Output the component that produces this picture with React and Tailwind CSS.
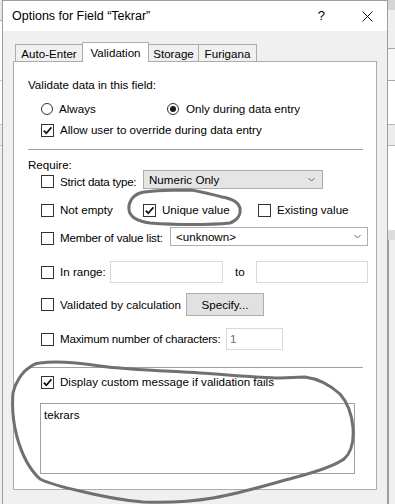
import React from "react";

function Check({ checked }) {
    return (
        <span className="flex h-[13px] w-[13px] shrink-0 items-center justify-center border border-[#333333] bg-white">
            {checked && (
                <svg width="11" height="11" viewBox="0 0 11 11">
                    <path d="M1.8 5.6 L4.3 8.2 L9.4 2.4" fill="none" stroke="#111" strokeWidth="1.7" />
                </svg>
            )}
        </span>
    );
}

function Radio({ selected }) {
    return (
        <span className="flex h-[12px] w-[12px] shrink-0 items-center justify-center rounded-full border border-[#333333] bg-white">
            {selected && <span className="h-[6px] w-[6px] rounded-full bg-[#1a1a1a]" />}
        </span>
    );
}

function Chevron() {
    return (
        <svg width="7" height="5" viewBox="0 0 7 5" className="shrink-0">
            <path d="M0.5 1 L3.5 4 L6.5 1" fill="none" stroke="#606060" strokeWidth="1" />
        </svg>
    );
}

function Label({ className = "", children }) {
    return <span className={`ml-[6px] shrink-0 whitespace-nowrap ${className}`}>{children}</span>;
}

function Tab({ label, selected, className }) {
    if (selected) {
        return (
            <div className={`relative z-10 mb-[-1px] flex h-[20px] shrink-0 items-start justify-center border border-b-0 border-[#acacac] bg-white pt-[3px] ${className}`}>
                {label}
            </div>
        );
    }
    return (
        <div className={`flex h-[17px] shrink-0 items-start justify-center border-t border-[#acacac] bg-[#f0f0f0] pt-[2px] ${className}`}>
            {label}
        </div>
    );
}

export default function App() {
    return (
        <div className="relative flex h-[504px] w-[395px] overflow-hidden bg-[#f0f0f0] font-['Liberation_Sans',Arial,sans-serif] text-[11.6px] leading-[14px] text-black">
            {/* fenêtre derrière, à gauche */}
            <div className="flex w-[2px] shrink-0 flex-col bg-[#f0f0f0]">
                <div className="h-[20px] bg-[#e6e6e6]" />
                <div className="h-px bg-[#b4b4b4]" />
                <div className="h-[59px] bg-white" />
                <div className="h-px bg-[#c8c8c8]" />
                <div className="h-[43px] bg-white" />
                <div className="h-px bg-[#c8c8c8]" />
                <div className="h-[20px] bg-[#ececec]" />
                <div className="h-px bg-[#c8c8c8]" />
            </div>

            {/* dialogue */}
            <div className="flex w-[386px] shrink-0 flex-col border-x border-t border-[#9c9c9c]">
                <div className="flex h-[30px] shrink-0 items-center bg-white pl-[9px] pr-[14px] text-[12.5px]">
                    <span className="flex-1 whitespace-nowrap">Options for Field “Tekrar”</span>
                    <span className="mr-[37px] text-[13px]">?</span>
                    <svg width="11" height="11" viewBox="0 0 11 11">
                        <path d="M0.5 0.5 L10.5 10.5 M10.5 0.5 L0.5 10.5" stroke="#111" strokeWidth="1" />
                    </svg>
                </div>

                <div className="flex flex-1 flex-col bg-[#f0f0f0] pl-[10px] pt-[11px]">
                    <div className="ml-[2px] flex items-end">
                        <Tab label="Auto-Enter" className="w-[67px] border-l" />
                        <Tab label="Validation" selected className="w-[67px]" />
                        <Tab label="Storage" className="w-[50px] border-r" />
                        <Tab label="Furigana" className="w-[58px] border-r" />
                    </div>

                    <div className="flex h-[429px] w-[364px] flex-col border border-[#acacac] bg-white pl-[14px]">
                        <div className="mt-[15px] flex h-[16px] items-center whitespace-nowrap">Validate data in this field:</div>

                        <div className="mt-[8px] flex h-[16px] items-center pl-[13px]">
                            <Radio />
                            <Label className="w-[108px]">Always</Label>
                            <Radio selected />
                            <Label className="ml-[7px]">Only during data entry</Label>
                        </div>

                        <div className="mt-[5px] flex h-[16px] items-center pl-[13px]">
                            <Check checked />
                            <Label>Allow user to override during data entry</Label>
                        </div>

                        <div className="mt-[11px] h-px w-[335px] bg-[#a0a0a0]" />

                        <div className="mt-[9px] flex h-[12px] items-center">Require:</div>

                        <div className="flex h-[21px] items-center pl-[13px]">
                            <Check />
                            <Label className="w-[83px] tracking-[-0.25px]">Strict data type:</Label>
                            <div className="mb-[4px] flex h-[19px] w-[180px] shrink-0 items-center justify-between border border-[#acacac] bg-[#e5e5e5] pl-[5px] pr-[7px]">
                                <span>Numeric Only</span>
                                <Chevron />
                            </div>
                        </div>

                        <div className="mt-[7px] flex h-[22px] items-center pl-[13px]">
                            <Check />
                            <Label className="w-[83px]">Not empty</Label>
                            <Check checked />
                            <Label className="w-[96px]">Unique value</Label>
                            <Check />
                            <Label>Existing value</Label>
                        </div>

                        <div className="mt-[7px] flex h-[20px] items-center pl-[13px]">
                            <Check />
                            <Label className="w-[110px] tracking-[-0.2px]">Member of value list:</Label>
                            <div className="mb-[3px] flex h-[19px] w-[198px] shrink-0 items-center justify-between border border-[#abadb3] bg-white pl-[5px] pr-[6px]">
                                <span>&lt;unknown&gt;</span>
                                <Chevron />
                            </div>
                        </div>

                        <div className="mt-[13px] flex h-[22px] items-center pl-[13px]">
                            <Check />
                            <Label className="w-[50px]">In range:</Label>
                            <div className="h-[22px] w-[113px] shrink-0 border border-[#d9d9d9] bg-white" />
                            <span className="w-[33px] shrink-0 pl-[12px]">to</span>
                            <div className="h-[22px] w-[112px] shrink-0 border border-[#d9d9d9] bg-white" />
                        </div>

                        <div className="mt-[10px] flex h-[23px] items-center pl-[13px]">
                            <Check />
                            <Label className="w-[126px]">Validated by calculation</Label>
                            <div className="flex h-[23px] w-[78px] shrink-0 items-center justify-center border border-[#adadad] bg-[#e1e1e1]">Specify...</div>
                        </div>

                        <div className="mt-[12px] flex h-[22px] items-center pl-[13px]">
                            <Check />
                            <Label className="w-[166px] tracking-[-0.2px]">Maximum number of characters:</Label>
                            <div className="flex h-[22px] w-[57px] shrink-0 items-center border border-[#d9d9d9] bg-white pl-[3px] text-[#6d6d6d]">1</div>
                        </div>

                        <div className="mt-[17px] h-px w-[335px] bg-[#a0a0a0]" />

                        <div className="mt-[7px] flex h-[14px] items-center pl-[13px]">
                            <Check checked />
                            <Label>Display custom message if validation fails</Label>
                        </div>

                        <div className="ml-[12px] mt-[14px] h-[71px] w-[315px] border border-[#a0a0a0] bg-white px-[3px] pt-[4px]">tekrars</div>
                    </div>
                </div>
            </div>

            {/* fenêtre derrière, à droite */}
            <div className="flex flex-1 flex-col bg-[#f0f0f0]">
                <div className="h-[10px] bg-[#d6d6d6]" />
                <div className="h-[38px] bg-[#f0f0f0]" />
                <div className="h-px bg-[#a8a8a8]" />
                <div className="h-[31px] bg-[#f7f7f7]" />
                <div className="h-px bg-[#a8a8a8]" />
                <div className="h-[43px] bg-white" />
                <div className="h-px bg-[#b8b8b8]" />
                <div className="h-[20px] bg-[#ececec]" />
                <div className="h-px bg-[#b8b8b8]" />
                <div className="h-[84px] bg-white" />
                <div className="h-[10px] bg-[#dcdcdc]" />
                <div className="flex-1 border-l border-[#a0a0a0] bg-[#f0f0f0]" />
            </div>

            {/* traits dessinés à la main */}
            <svg className="pointer-events-none absolute left-0 top-0" width="395" height="504" viewBox="0 0 395 504">
                <path
                    d="M190 190 C170 190 150 190 140 193 C132 196 128 203 129 210 C130 217 136 221 150 223 C175 225 210 225 230 223 C238 220 241 214 240 208 C238 202 233 199 222 197 C210 194 200 191 190 190"
                    fill="none"
                    stroke="#707070"
                    strokeWidth="3"
                    strokeLinejoin="round"
                />
                <path
                    d="M40 363 C55 361 80 363 100 366 C130 370 170 371 200 373 C230 375 260 378 280 378 L305 377 C320 379 330 385 340 394 C348 403 352 415 353 428 C354 442 352 452 344 459 C333 467 312 473 293 478 C270 484 245 492 213 498 C195 501 170 503 143 502 C120 500 100 496 80 491 C62 487 48 483 40 479 C30 470 22 455 17 437 C13 422 12 405 13 393 C15 383 22 372 30 367 C34 364 37 363 40 363"
                    fill="none"
                    stroke="#707070"
                    strokeWidth="3"
                    strokeLinejoin="round"
                />
            </svg>
        </div>
    );
}
